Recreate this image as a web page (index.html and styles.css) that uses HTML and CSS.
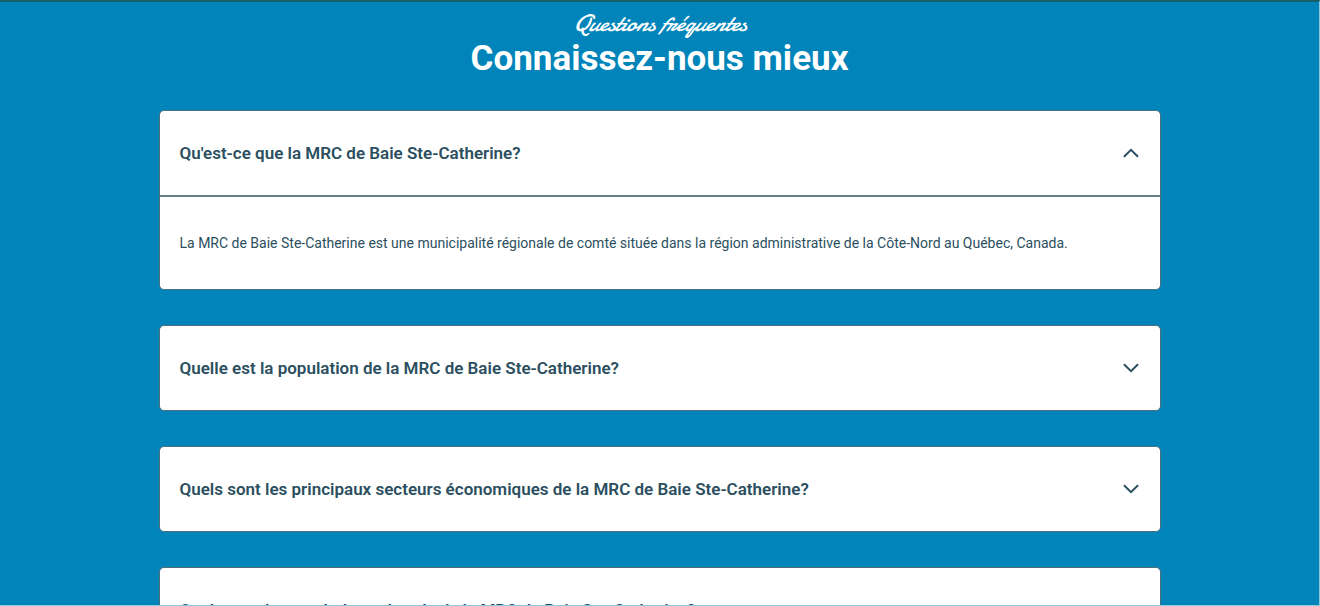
FILE: index.html
```html
<!DOCTYPE html>
<html lang="fr">
<head>
<meta charset="utf-8">
<meta name="viewport" content="width=device-width, initial-scale=1">
<title>Questions fréquentes</title>
<link rel="stylesheet" href="styles.css">
</head>
<body>
<main class="faq">
  <header class="faq-header">
    <p class="faq-kicker">Questions fréquentes</p>
    <h1 class="faq-title">Connaissez-nous mieux</h1>
  </header>
  <div class="faq-list">
    <section class="card">
      <h2 class="card-heading"><button class="card-toggle" type="button" aria-expanded="true" aria-controls="answer-1">
        <span>Qu'est-ce que la MRC de Baie Ste-Catherine?</span>
        <svg class="chevron chevron-up" viewBox="0 0 16 10" aria-hidden="true"><path d="M1.500 1.800 8 8.200l6.500-6.400"/></svg>
      </button></h2>
      <p class="card-answer" id="answer-1">La MRC de Baie Ste-Catherine est une municipalité régionale de comté située dans la région administrative de la Côte-Nord au Québec, Canada.</p>
    </section>
    <section class="card">
      <h2 class="card-heading"><button class="card-toggle" type="button" aria-expanded="false">
        <span>Quelle est la population de la MRC de Baie Ste-Catherine?</span>
        <svg class="chevron" viewBox="0 0 16 10" aria-hidden="true"><path d="M1.500 1.800 8 8.200l6.500-6.400"/></svg>
      </button></h2>
    </section>
    <section class="card">
      <h2 class="card-heading"><button class="card-toggle" type="button" aria-expanded="false">
        <span>Quels sont les principaux secteurs économiques de la MRC de Baie Ste-Catherine?</span>
        <svg class="chevron" viewBox="0 0 16 10" aria-hidden="true"><path d="M1.500 1.800 8 8.200l6.500-6.400"/></svg>
      </button></h2>
    </section>
    <section class="card">
      <h2 class="card-heading"><button class="card-toggle" type="button" aria-expanded="false">
        <span>Quels sont les symboles culturels de la MRC de Baie Ste-Catherine?</span>
        <svg class="chevron" viewBox="0 0 16 10" aria-hidden="true"><path d="M1.500 1.800 8 8.200l6.500-6.400"/></svg>
      </button></h2>
    </section>
  </div>
</main>
</body>
</html>
```

FILE: styles.css
```css
* { box-sizing: border-box; }

body {
  margin: 0;
  background: #0084b9;
  color: #2b4f60;
  font-family: Roboto, "Liberation Sans", sans-serif;
}

.faq {
  height: 100vh;
  overflow: hidden;
  padding: 8px 16px 0;
  border-top: 2px solid #155f69;
  border-right: 1px solid #8cc8e0;
  border-bottom: 1px solid #8cc8e0;
}

.faq-header {
  margin-bottom: 31px;
  color: #fff;
  text-align: center;
}

.faq-kicker {
  margin: 0;
  font-family: Yellowtail, Damion, cursive;
  font-size: 24px;
  font-style: italic;
  line-height: 28px;
}

.faq-title {
  margin: 0;
  font-size: 35px;
  font-weight: 700;
  line-height: 41px;
}

.faq-list {
  display: grid;
  gap: 35px;
  max-width: 1002px;
  margin: 0 auto;
}

.card {
  overflow: hidden;
  border: 1px solid #4b6f7b;
  border-radius: 5px;
  background: #fff;
}

.card-heading { margin: 0; }

.card-toggle {
  display: flex;
  align-items: center;
  justify-content: space-between;
  gap: 20px;
  width: 100%;
  padding: 30px 21px 30px 20px;
  border: 0;
  background: none;
  color: inherit;
  font: 600 17px/24px Roboto, "Liberation Sans", sans-serif;
  text-align: left;
  cursor: pointer;
}

.chevron {
  flex: none;
  width: 16px;
  height: 10px;
  fill: none;
  stroke: currentColor;
  stroke-width: 2;
  stroke-linecap: round;
}

.chevron-up { transform: rotate(180deg); }

.card-answer {
  margin: 0;
  padding: 34px 20px;
  border-top: 2px solid #67818a;
  font-size: 14px;
  line-height: 24px;
}
```
